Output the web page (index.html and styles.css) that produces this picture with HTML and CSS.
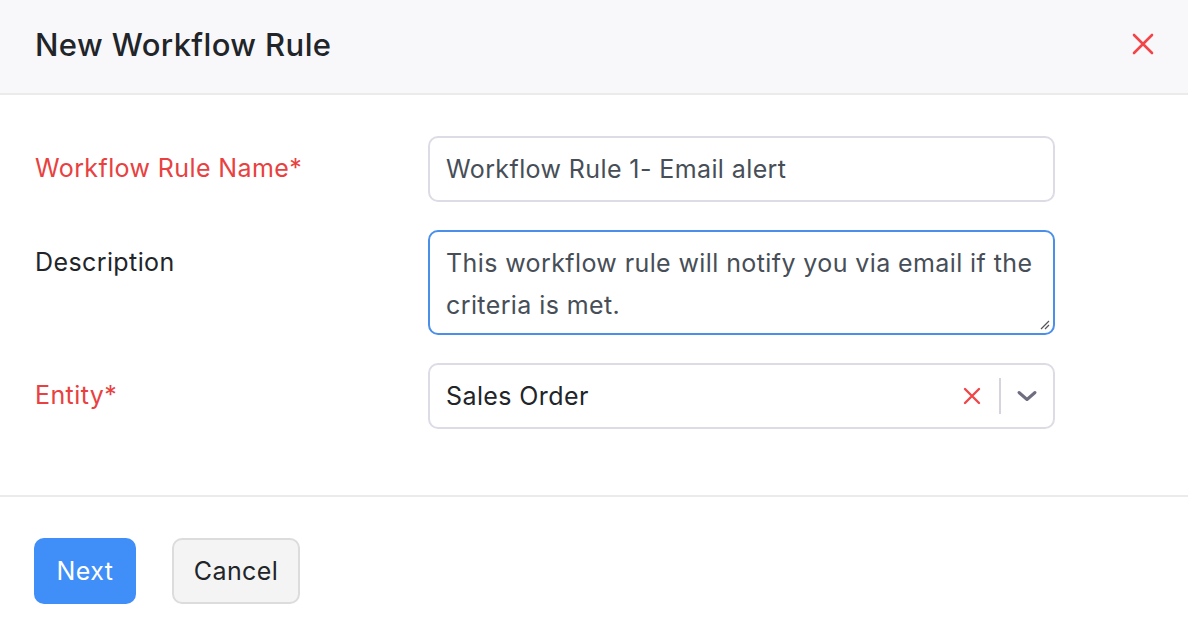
FILE: index.html
```html
<!DOCTYPE html>
<html>
<head>
<meta charset="utf-8">
<link rel="stylesheet" href="styles.css">
</head>
<body>
<div class="modal">
  <div class="modal-header">
    <h1 class="title">New Workflow Rule</h1>
    <button class="close" aria-label="Close">
      <svg width="22" height="22" viewBox="0 0 22 22"><path d="M2 2L20 20M20 2L2 20" stroke="#f0464a" stroke-width="2.6" stroke-linecap="round"/></svg>
    </button>
  </div>
  <div class="modal-body">
    <div class="row">
      <label class="label required">Workflow Rule Name*</label>
      <div class="field"><div class="input">Workflow Rule 1- Email alert</div></div>
    </div>
    <div class="row">
      <label class="label">Description</label>
      <div class="field">
        <div class="textarea">This workflow rule will notify you via email if the criteria is met.
          <svg class="grip" width="12" height="12" viewBox="0 0 12 12"><path d="M11 3L3 11M11 7L7 11" stroke="#555" stroke-width="1.2"/></svg>
        </div>
      </div>
    </div>
    <div class="row">
      <label class="label required">Entity*</label>
      <div class="field">
        <div class="select">
          <span class="select-value">Sales Order</span>
          <span class="select-clear">
            <svg width="18" height="18" viewBox="0 0 18 18"><path d="M2 2L16 16M16 2L2 16" stroke="#f0464a" stroke-width="2.4" stroke-linecap="round"/></svg>
          </span>
          <span class="select-divider"></span>
          <span class="select-arrow">
            <svg width="22" height="12" viewBox="0 0 22 12"><path d="M3 2.5L11 9.5L19 2.5" fill="none" stroke="#6e6e80" stroke-width="3" stroke-linecap="round" stroke-linejoin="round"/></svg>
          </span>
        </div>
      </div>
    </div>
  </div>
  <div class="modal-footer">
    <button class="btn btn-primary">Next</button>
    <button class="btn btn-secondary">Cancel</button>
  </div>
</div>
</body>
</html>
```
FILE: styles.css
```css
* { box-sizing: border-box; }
html, body { margin: 0; padding: 0; background: #fff; }
body {
  font-family: Inter, "Noto Sans", "Liberation Sans", sans-serif;
  color: #212529;
  width: 1188px;
  height: 634px;
  overflow: hidden;
}
.modal { width: 1188px; }
.modal-header {
  height: 95px;
  background: #f8f8fb;
  border-bottom: 2px solid #ebebeb;
  display: flex;
  align-items: center;
  justify-content: space-between;
  padding: 0 34px 5px 35px;
}
.title {
  margin: 0;
  font-size: 31px;
  font-weight: 500;
  color: #212529;
  letter-spacing: 0.4px;
}
.close {
  background: none;
  border: none;
  padding: 0;
  display: flex;
  cursor: pointer;
}
.modal-body {
  padding: 41px 133px 66px 35px;
  display: flex;
  flex-direction: column;
  gap: 28px;
  border-bottom: 2px solid #ebebeb;
}
.row {
  display: flex;
  align-items: flex-start;
}
.label {
  width: 393px;
  flex: none;
  font-size: 25px;
  letter-spacing: 0.4px;
  line-height: 30px;
  padding-top: 17px;
  color: #212529;
}
.label.required { color: #e8413f; }
.field { flex: 1; }
.input, .textarea, .select {
  border: 2px solid #dcdce6;
  border-radius: 10px;
  font-size: 25px;
  letter-spacing: 0.4px;
  color: #474e57;
  background: #fff;
}
.input {
  height: 66px;
  padding: 0 16px;
  display: flex;
  align-items: center;
}
.textarea {
  position: relative;
  height: 105px;
  padding: 10px 16px;
  line-height: 42px;
  border-color: #4a8fea;
}
.grip { position: absolute; right: 3px; bottom: 3px; }
.select {
  height: 66px;
  display: flex;
  align-items: center;
  padding-left: 16px;
  color: #212529;
}
.select-value { flex: 1; }
.select-clear { display: flex; margin-right: 18px; }
.select-divider {
  width: 2px;
  height: 36px;
  background: #d5d5de;
}
.select-arrow {
  display: flex;
  padding: 0 15px 0 15px;
}
.modal-footer {
  padding: 41px 34px;
  display: flex;
  gap: 36px;
}
.btn {
  font-family: inherit;
  font-size: 25px;
  letter-spacing: 0.4px;
  height: 66px;
  border-radius: 10px;
  cursor: pointer;
}
.btn-primary {
  width: 102px;
  background: #408ef8;
  border: none;
  color: #fff;
}
.btn-secondary {
  width: 128px;
  background: #f4f4f4;
  border: 2px solid #dcdcdc;
  color: #212529;
}
```
